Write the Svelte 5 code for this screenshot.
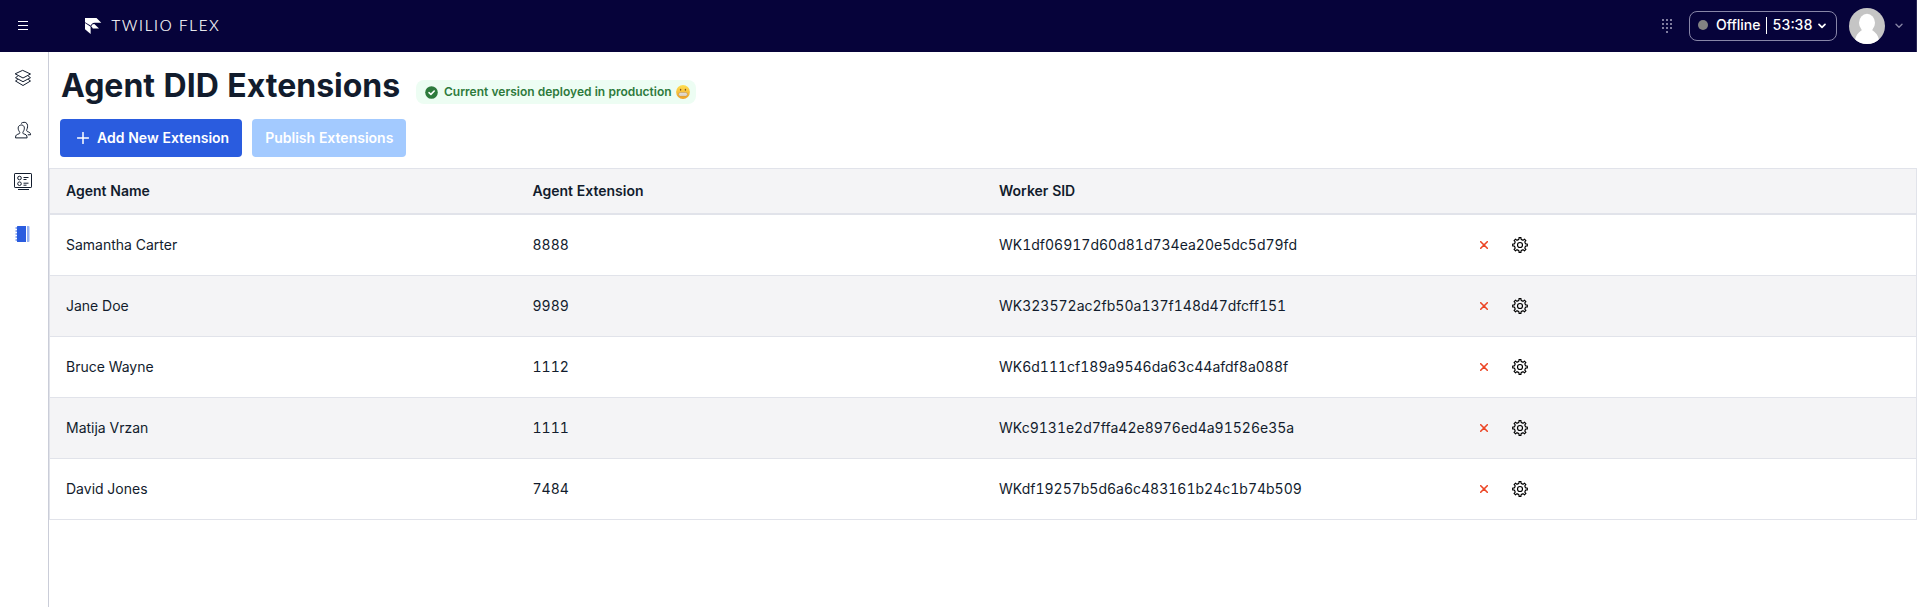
<script>
  const columns = ['Agent Name', 'Agent Extension', 'Worker SID', ''];
  const agents = [
    { name: 'Samantha Carter', ext: '8888', sid: 'WK1df06917d60d81d734ea20e5dc5d79fd' },
    { name: 'Jane Doe', ext: '9989', sid: 'WK323572ac2fb50a137f148d47dfcff151' },
    { name: 'Bruce Wayne', ext: '1112', sid: 'WK6d111cf189a9546da63c44afdf8a088f' },
    { name: 'Matija Vrzan', ext: '1111', sid: 'WKc9131e2d7ffa42e8976ed4a91526e35a' },
    { name: 'David Jones', ext: '7484', sid: 'WKdf19257b5d6a6c483161b24c1b74b509' },
  ];
  const dots = [0, 1, 2, 3].flatMap((r) => (r < 3 ? [0, 1, 2] : [1]).map((c) => [c * 4, r * 4]));

  // Outline of an eight-toothed gear centred on 8,8
  const gear = (() => {
    const pts = [];
    for (let i = 0; i < 8; i++) {
      for (const [offset, radius] of [[-16, 5.6], [-10, 6], [-8, 7.4], [8, 7.4], [10, 6], [16, 5.6]]) {
        const a = ((i * 45 + offset) * Math.PI) / 180;
        pts.push(`${(8 + radius * Math.cos(a)).toFixed(2)} ${(8 + radius * Math.sin(a)).toFixed(2)}`);
      }
    }
    return `M${pts.join('L')}Z`;
  })();
</script>

<div class="app">
  <header class="topbar">
    <svg class="menu" width="10" height="10" viewBox="0 0 10 10"><path d="M0 .5h10M0 4.5h10M0 8.5h10" stroke="#fff" /></svg>
    <svg class="logo" width="17" height="17" viewBox="0 0 17 17" fill="#fff">
      <path d="M0 0H11.5L16.300 4.700H9.500C7.500 4.700 6.200 6 6 7.800L0 4.200Z" />
      <path d="M0 5 5.600 8.700V16L0 11.200Z" />
      <path d="M6.500 8.300C6.700 6.900 7.700 6.100 9.300 6.100L14 10.500H7.800Z" />
    </svg>
    <svg class="wordmark" width="116" height="20" viewBox="0 0 116 20">
      <text x="0.500" y="15" textLength="107">TWILIO FLEX</text>
    </svg>
    <svg class="dialpad" width="10" height="14" viewBox="0 0 10 14" fill="#7f7c9e">
      {#each dots as [x, y]}<rect {x} {y} width="2" height="2" />{/each}
    </svg>
    <button class="status">
      <span class="dot"></span><span class="state">Offline</span><span class="bar"></span><span>53:38</span>
      <svg class="caret" width="8" height="6" viewBox="0 0 8 6" fill="none" stroke="#fff" stroke-width="1.7" stroke-linecap="round" stroke-linejoin="round"><path d="M1 1.3 4 4.3 7 1.3" /></svg>
    </button>
    <svg class="avatar" width="36" height="36" viewBox="0 0 36 36">
      <defs><clipPath id="round"><circle cx="18" cy="18" r="18" /></clipPath></defs>
      <g clip-path="url(#round)">
        <rect width="36" height="36" fill="#c5c5c5" />
        <ellipse cx="18" cy="14.8" rx="8" ry="9" fill="#fff" />
        <path d="M5.500 36C6 27 9.500 24.500 13 22H23C26.500 24.500 30 27 30.500 36Z" fill="#fff" />
      </g>
    </svg>
    <svg class="more" width="8" height="6" viewBox="0 0 8 6" fill="none" stroke="#8684a4" stroke-width="1.400" stroke-linecap="round" stroke-linejoin="round"><path d="M1 1.300 4 4.300 7 1.300" /></svg>
  </header>

  <div class="body">
    <nav class="sidebar">
      <svg width="18" height="18" viewBox="0 0 18 18" fill="none" stroke="#121c2d" stroke-linejoin="round" stroke-linecap="round">
        <path d="M9 1.500 16.500 5 9 9 1.500 5ZM3.500 7.300 1.500 8.700 9 12.700 16.500 8.700 14.500 7.300M3.500 10.600 1.500 12 9 16.500 16.500 12 14.500 10.600" />
      </svg>
      <svg width="18" height="18" viewBox="0 0 18 18" fill="none" stroke="#121c2d" stroke-linejoin="round" stroke-linecap="round">
        <path d="M1.500 16.500C1.500 13.500 3 13.600 5.300 12.700C6 12.300 5.900 11.400 5.400 10.700C3.200 7.500 4.100 4 7.300 4S11.300 7.500 9.200 10.700C8.700 11.400 8.700 12.300 9.300 12.700C11.600 13.600 13.100 13.500 13.100 16.500Z" />
        <path d="M7.300 2.200C8.300 1 12 .7 13 2.700C14.100 4.800 13.500 7 12.800 8.600C12.500 9.700 12.700 10.200 13.500 10.600C15.500 11.300 16.500 11.600 16.600 13.800H14.200" />
      </svg>
      <svg width="18" height="18" viewBox="0 0 18 18" fill="none" stroke="#121c2d" stroke-linejoin="round">
        <rect x=".5" y=".5" width="17" height="14" rx=".6" />
        <circle cx="5.500" cy="5" r="1.800" /><circle cx="5.500" cy="10.700" r="1.800" />
        <path d="M9.500 4.500h5M9.500 6.500h3M9.500 10.200h5M9.500 12.200h3M4 16.500h11" />
      </svg>
      <svg width="18" height="18" viewBox="0 0 18 18">
        <path d="M3.500 1H12v16H3.500Q3 17 3 16.500V1.500Q3 1 3.500 1Z" fill="#2a5cdf" />
        <path d="M2.500 2.500v13" stroke="#2a5cdf" stroke-width="2" stroke-dasharray="1 2" />
        <path d="M13 1h1.500q1 0 1 1v14q0 1-1 1H13Z" fill="#96b2f2" />
      </svg>
    </nav>

    <main>
      <div class="heading">
        <h1>Agent DID Extensions</h1>
        <div class="badge">
          <svg width="13" height="13" viewBox="0 0 13 13"><circle cx="6.500" cy="6.500" r="6.300" fill="#2d7a3c" /><path d="M4 6.700 5.900 8.400 9.200 5" fill="none" stroke="#fff" stroke-width="1.600" stroke-linecap="round" stroke-linejoin="round" /></svg>
          <span>Current version deployed in production</span>
          <svg class="emoji" width="14" height="14" viewBox="0 0 14 14">
            <defs><linearGradient id="face" x2="0" y2="1"><stop stop-color="#ffe052" /><stop offset="1" stop-color="#f0a126" /></linearGradient></defs>
            <circle cx="7" cy="7" r="6.900" fill="url(#face)" />
            <ellipse cx="4.600" cy="4.800" rx=".7" ry="1" fill="#7d531c" /><ellipse cx="9.400" cy="4.800" rx=".7" ry="1" fill="#7d531c" />
            <rect x="2.700" y="7.600" width="8.600" height="3.400" rx="1.600" fill="#f3eee6" stroke="#a58454" stroke-width=".5" />
            <path d="M2.900 9.300h8.200M5 7.700v3.200M7 7.700v3.200M9 7.700v3.200" stroke="#c4b8a6" stroke-width=".4" />
          </svg>
        </div>
      </div>

      <div class="actions">
        <button class="add">
          <svg width="12" height="12" viewBox="0 0 12 12"><path d="M6 .5v11M.5 6h11" stroke="#fff" stroke-width="1.500" stroke-linecap="round" /></svg>
          Add New Extension
        </button>
        <button class="publish" disabled>Publish Extensions</button>
      </div>

      <table>
        <thead>
          <tr>{#each columns as column}<th>{column}</th>{/each}</tr>
        </thead>
        <tbody>
          {#each agents as agent}
            <tr>
              <td>{agent.name}</td>
              <td>{agent.ext}</td>
              <td>{agent.sid}</td>
              <td>
                <div class="tools">
                  <svg width="8" height="8" viewBox="0 0 8 8"><path d="M.7 .7 7.300 7.300M7.300 .7 .7 7.300" stroke="#ec4626" stroke-width="1.600" stroke-linecap="round" /></svg>
                  <svg width="16" height="16" viewBox="0 0 16 16" fill="none" stroke="#000" stroke-width="1.150" stroke-linejoin="round"><path d={gear} /><circle cx="8" cy="8" r="2.500" /></svg>
                </div>
              </td>
            </tr>
          {/each}
        </tbody>
      </table>
    </main>
  </div>
</div>

<style>
  .app {
    height: 607px;
    display: flex;
    flex-direction: column;
    overflow: hidden;
    background: #fff;
    color: #121c2d;
    font: 14px/20px Inter, sans-serif;
    font-variant-numeric: tabular-nums;
  }
  svg { display: block; flex: none; }
  button { border: 0; margin: 0; font: inherit; color: #fff; }
  .topbar {
    flex: none;
    height: 52px;
    box-sizing: border-box;
    display: flex;
    align-items: center;
    padding: 0 13px 0 18px;
    border-right: 1px solid #2b2856;
    background: #06033a;
  }
  .menu { margin: 0 57px 1px 0; }
  .logo { margin-right: 9px; }
  .wordmark text { font: 300 15px Lato, sans-serif; fill: #fff; stroke: #fff; stroke-width: 0.2px; }
  .dialpad { margin-left: auto; margin-right: 17px; }
  .status {
    width: 148px;
    height: 30px;
    box-sizing: border-box;
    display: flex;
    align-items: center;
    padding: 0 10px 2px 8px;
    border: 1px solid #8886a8;
    border-radius: 8px;
    background: transparent;
    font-weight: 500;
  }
  .dot { width: 10px; height: 10px; border-radius: 50%; background: #828282; margin-right: 8px; }
  .bar { width: 1px; height: 17px; background: #fff; margin: 0 6px 0 5px; }
  .caret { margin: 2px 0 0 auto; }
  .avatar { margin-left: 12px; }
  .more { margin-left: 10px; }
  .body { flex: 1; display: flex; }
  .sidebar {
    width: 48px;
    flex: none;
    display: flex;
    flex-direction: column;
    align-items: center;
    gap: 34px;
    padding: 17px 2px 0 0;
    box-sizing: border-box;
  }
  main { flex: 1; border-left: 1px solid #cacdd8; }
  .heading { display: flex; height: 67px; box-sizing: border-box; padding: 12px 0 0 12px; }
  h1 { flex: none; width: 355px; margin: 0; font-size: 32px; line-height: 44px; font-weight: 700; letter-spacing: -0.01px; }
  .badge {
    width: 280px;
    box-sizing: border-box;
    height: 24px;
    display: flex;
    align-items: center;
    margin-top: 16px;
    padding: 0 0 0 9px;
    border-radius: 8px;
    background: #edfdf3;
    color: #2d7a3c;
    font-size: 12px;
    font-weight: 600;
  }
  .badge span { margin: 0 4px 0 6px; }
  .actions { display: flex; gap: 10px; padding: 0 0 11px 11px; }
  .actions button {
    height: 38px;
    display: flex;
    align-items: center;
    padding: 0 13px;
    border-radius: 4px;
    font-weight: 600;
  }
  .actions .add { background: #2a5cdf; padding-left: 17px; gap: 8px; }
  .actions .publish { background: #a3caff; }
  table {
    width: 100%;
    table-layout: fixed;
    border-collapse: separate;
    border-spacing: 0;
    border: 1px solid #e1e3ea;
  }
  th, td { box-sizing: border-box; padding: 0 16px; text-align: left; }
  th { height: 46px; font-weight: 600; background: #f4f4f6; border-bottom: 2px solid #e1e3ea; }
  td { height: 61px; border-bottom: 1px solid #e1e3ea; }
  tbody tr:last-child td { height: 60px; border-bottom: 0; }
  tbody tr:nth-child(even) { background: #f4f4f6; }
  .tools { display: flex; align-items: center; gap: 24px; padding-left: 14px; }
</style>
